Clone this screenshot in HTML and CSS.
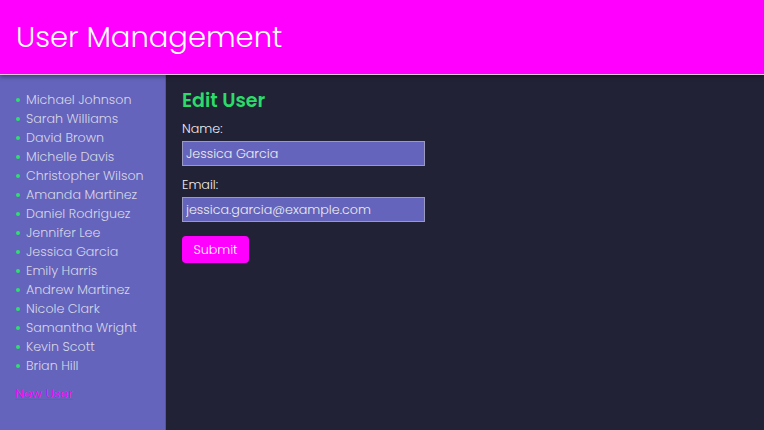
FILE: index.html
```html
<!DOCTYPE html>
<html>
<head>
<meta charset="utf-8">
<link rel="stylesheet" href="styles.css">
</head>
<body>
<header class="topbar"><h1 class="title">User Management</h1></header>
<div class="layout">
  <aside class="sidebar">
    <ul class="user-list">
      <li>Michael Johnson</li>
      <li>Sarah Williams</li>
      <li>David Brown</li>
      <li>Michelle Davis</li>
      <li>Christopher Wilson</li>
      <li>Amanda Martinez</li>
      <li>Daniel Rodriguez</li>
      <li>Jennifer Lee</li>
      <li>Jessica Garcia</li>
      <li>Emily Harris</li>
      <li>Andrew Martinez</li>
      <li>Nicole Clark</li>
      <li>Samantha Wright</li>
      <li>Kevin Scott</li>
      <li>Brian Hill</li>
    </ul>
    <a class="new-user" href="#">New User</a>
  </aside>
  <main class="content">
    <h2 class="heading">Edit User</h2>
    <form class="form">
      <label class="label">Name:</label>
      <input class="field" type="text" value="Jessica Garcia">
      <label class="label">Email:</label>
      <input class="field" type="text" value="jessica.garcia@example.com">
      <button class="submit" type="button">Submit</button>
    </form>
  </main>
</div>
</body>
</html>
```
FILE: styles.css
```css
html, body {
  margin: 0;
  padding: 0;
  height: 100%;
}
body {
  font-family: "Poppins", "Open Sans", sans-serif;
  font-weight: 300;
  background: #222236;
  color: #eeeeee;
  display: flex;
  flex-direction: column;
  overflow: hidden;
}
.topbar {
  background: #ff00ff;
  height: 74px;
  border-bottom: 1px solid #d9c4d9;
  box-shadow: 0 2px 4px rgba(0, 0, 0, 0.35);
  display: flex;
  align-items: center;
  padding: 0 16px;
  position: relative;
  z-index: 1;
  flex: none;
}
.title {
  margin: 0;
  font-size: 29px;
  font-weight: 300;
  color: #ffffff;
}
.layout {
  flex: 1;
  display: flex;
}
.sidebar {
  width: 166px;
  background: #6464bc;
  border-right: 1px solid #55559c;
  padding: 15px 0 0 15px;
  box-sizing: border-box;
  flex: none;
}
.user-list {
  list-style: none;
  margin: 0;
  padding: 0;
}
.user-list li {
  font-size: 12.7px;
  line-height: 19px;
  color: #d6d6e6;
  display: flex;
  align-items: center;
}
.user-list li::before {
  content: "";
  width: 4px;
  height: 4px;
  border-radius: 50%;
  background: #2ee06e;
  margin: 0 6px 0 1px;
}
.new-user {
  display: block;
  width: max-content;
  margin-top: 9px;
  font-size: 12.7px;
  color: #ff00ff;
  text-decoration: underline;
  line-height: 19px;
}
.content {
  flex: 1;
  padding: 13px 0 0 16px;
}
.heading {
  margin: 0;
  font-size: 19px;
  line-height: 26px;
  font-weight: 600;
  color: #2bdc6a;
}
.form {
  display: flex;
  flex-direction: column;
  align-items: flex-start;
  margin-top: 5px;
}
.label {
  font-size: 12.7px;
  line-height: 19px;
  margin-bottom: 3px;
}
.field {
  width: 243px;
  height: 25px;
  box-sizing: border-box;
  background: #6464bc;
  border: 1px solid #9a9ac0;
  color: #eeeeee;
  font-family: inherit;
  font-weight: 300;
  font-size: 12.7px;
  padding: 0 3px;
  margin: 0 0 9px 0;
}
.submit {
  margin-top: 5px;
  background: #ff00ff;
  color: #ffffff;
  border: none;
  border-radius: 4px;
  width: 67px;
  height: 27px;
  font-family: inherit;
  font-weight: 300;
  font-size: 12.7px;
  padding: 0;
}
```
